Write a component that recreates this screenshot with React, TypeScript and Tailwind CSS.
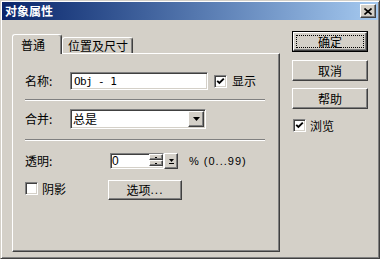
import React from "react";

const cjk = "font-['Noto_Sans_CJK_SC','Noto_Sans',sans-serif]";
const sunken =
  "border border-t-[#808080] border-l-[#808080] border-r-white border-b-white shadow-[inset_1px_1px_#404040,inset_-1px_-1px_#d4d0c8]";
const raised =
  "border border-t-white border-l-white border-r-[#404040] border-b-[#404040] shadow-[inset_-1px_-1px_#808080]";

const CheckBox = ({ checked }: { checked?: boolean }) => (
  <div className={`w-[13px] h-[13px] shrink-0 bg-white flex items-center justify-center ${sunken}`}>
    {checked && (
      <svg width="9" height="9" viewBox="0 0 9 9">
        <polyline points="1.2,3.8 3.4,6 7.8,1.6" fill="none" stroke="#000" strokeWidth="1.9" />
      </svg>
    )}
  </div>
);

const DownArrow = () => (
  <svg width="7" height="4" viewBox="0 0 7 4">
    <polygon points="0,0 7,0 3.5,4" fill="#000" />
  </svg>
);

const Button = ({ label, isDefault }: { label: string; isDefault?: boolean }) => {
  if (isDefault) {
    return (
      <div className="w-[76px] h-[21px] border border-black">
        <div className={`w-full h-full flex items-center justify-center p-[2px] ${raised}`}>
          <div className={`w-full h-full border border-dotted border-black flex items-center justify-center text-[12px] leading-none text-black ${cjk}`}>
            {label}
          </div>
        </div>
      </div>
    );
  }
  return (
    <div className={`w-[76px] h-[21px] flex items-center justify-center text-[12px] leading-none text-black ${cjk} ${raised}`}>
      {label}
    </div>
  );
};

const Separator = ({ className }: { className: string }) => (
  <div className={`w-[240px] h-[2px] border-t border-t-[#808080] border-b border-b-white ${className}`} />
);

export default function App() {
  return (
    <div className="w-[380px] h-[259px] bg-[#d4d0c8] border border-t-[#d4d0c8] border-l-[#d4d0c8] border-r-[#404040] border-b-[#404040] shadow-[inset_1px_1px_#fff,inset_-1px_-1px_#808080] p-px overflow-hidden">
      {/* title bar */}
      <div className="h-[18px] flex items-center justify-between bg-linear-to-r from-[#0a246a] to-[#a6caf0]">
        <span className={`pl-[3px] text-[12px] leading-none font-bold text-white ${cjk}`}>对象属性</span>
        <div className={`w-[16px] h-[14px] mr-[2px] bg-[#d4d0c8] flex items-center justify-center ${raised}`}>
          <svg width="8" height="7" viewBox="0 0 8 7">
            <path d="M0.5 0.5 L7.5 6.5 M7.5 0.5 L0.5 6.5" stroke="#000" strokeWidth="1.6" />
          </svg>
        </div>
      </div>

      <div className="flex pl-[10px] gap-[12px]">
        {/* left column: tabs + panel */}
        <div className="mt-[14px] w-[268px] flex flex-col">
          <div className={`h-[20px] flex items-end text-[12px] leading-none text-black ${cjk}`}>
            <div className="relative z-10 w-[50px] h-[20px] pl-[8px] pt-[4px] bg-[#d4d0c8] border-l border-t border-r border-l-white border-t-white border-r-[#404040] rounded-t-[3px] shadow-[inset_-1px_0_#808080]">
              普通
            </div>
            <div className="w-[71px] h-[16px] mb-px pl-[5px] pt-[2px] border-l border-t border-r border-l-white border-t-white border-r-[#404040] rounded-t-[3px] shadow-[inset_-1px_0_#808080]">
              位置及尺寸
            </div>
          </div>

          <div className={`-mt-px h-[199px] border border-t-white border-l-white border-r-[#404040] border-b-[#404040] shadow-[inset_-1px_-1px_#808080] pl-[12px] pt-[18px] flex flex-col text-[12px] leading-none text-black ${cjk}`}>
            {/* name row */}
            <div className="flex items-center h-[18px]">
              <span className="w-[45px]">名称:</span>
              <div className={`w-[138px] h-[18px] bg-white flex items-center pl-[3px] ${sunken}`}>
                <span className="font-['DejaVu_Sans_Mono',monospace] text-[11px] tracking-[-0.6px] leading-none">Obj - 1</span>
              </div>
              <div className="ml-[6px]">
                <CheckBox checked />
              </div>
              <span className="ml-[5px]">显示</span>
            </div>

            <Separator className="mt-[9px]" />

            {/* merge row */}
            <div className="mt-[8px] flex items-center h-[20px]">
              <span className="w-[45px]">合并:</span>
              <div className={`w-[136px] h-[20px] bg-white flex items-center justify-between pl-[2px] ${sunken}`}>
                <span>总是</span>
                <div className={`w-[16px] h-[16px] mr-px bg-[#d4d0c8] flex items-center justify-center ${raised}`}>
                  <DownArrow />
                </div>
              </div>
            </div>

            <Separator className="mt-[10px]" />

            {/* transparency row */}
            <div className="mt-[12px] flex items-center h-[16px]">
              <span className="w-[85px]">透明:</span>
              <div className={`w-[54px] h-[16px] bg-white flex ${sunken}`}>
                <span className="flex-1 pl-[1px] flex items-center font-['Liberation_Sans',sans-serif] text-[12px]">0</span>
                <div className="w-[14px] flex flex-col">
                  <div className={`h-[6px] bg-[#d4d0c8] flex items-center justify-center ${raised}`}>
                    <div className="w-[2px] h-[1px] bg-black" />
                  </div>
                  <div className={`h-[6px] bg-[#d4d0c8] flex items-center justify-center ${raised}`}>
                    <div className="w-[2px] h-[1px] bg-black" />
                  </div>
                </div>
              </div>
              <div className={`w-[14px] h-[16px] bg-[#d4d0c8] flex flex-col items-center justify-center gap-px ${raised}`}>
                <svg width="5" height="3" viewBox="0 0 5 3">
                  <polygon points="0,0 5,0 2.5,3" fill="#000" />
                </svg>
                <div className="w-[5px] h-px bg-black" />
              </div>
              <span className="ml-[11px] font-['Liberation_Sans',sans-serif] text-[11px] tracking-[1px]">% (0...99)</span>
            </div>

            {/* shadow row */}
            <div className="mt-[11px] flex items-start h-[20px]">
              <div className="w-[83px] flex items-center mt-[2px]">
                <CheckBox />
                <span className="ml-[4px]">阴影</span>
              </div>
              <div className={`w-[74px] h-[20px] flex items-center justify-center ${raised}`}>
                选项<span className="font-['Liberation_Sans',sans-serif] tracking-[1px]">...</span>
              </div>
            </div>
          </div>
        </div>

        {/* right column: buttons */}
        <div className="mt-[11px] w-[76px] flex flex-col">
          <Button label="确定" isDefault />
          <div className="mt-[8px]">
            <Button label="取消" />
          </div>
          <div className="mt-[7px]">
            <Button label="帮助" />
          </div>
          <div className={`mt-[10px] ml-px flex items-center text-[12px] leading-none text-black ${cjk}`}>
            <CheckBox checked />
            <span className="ml-[4px]">浏览</span>
          </div>
        </div>
      </div>
    </div>
  );
}
